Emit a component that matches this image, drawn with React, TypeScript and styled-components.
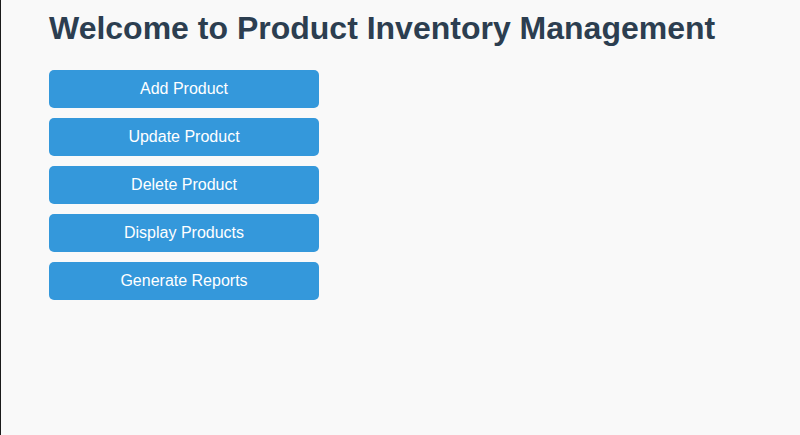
import styled, { createGlobalStyle } from 'styled-components';

const GlobalStyle = createGlobalStyle`
    html, body {
        margin: 0;
        padding: 0;
        background-color: #f9f9f9;
        font-family: "Liberation Sans", Arial, sans-serif;
    }
`;

const Page = styled.div`
    box-sizing: border-box;
    min-height: 435px;
    border-left: 1px solid #1a1a1a;
    padding: 10px 48px;
`;

const Title = styled.h1`
    margin: 0 0 23px;
    font-size: 32px;
    font-weight: bold;
    color: #2c3e50;
`;

const Menu = styled.div`
    display: flex;
    flex-direction: column;
    gap: 10px;
    width: 270px;
`;

const MenuButton = styled.button`
    height: 38px;
    border: none;
    border-radius: 5px;
    background-color: #3498db;
    color: #ffffff;
    font-family: "Liberation Sans", Arial, sans-serif;
    font-size: 16px;
    cursor: pointer;
    &:hover {
        background-color: #2980b9;
    }
`;

const actions = ['Add Product', 'Update Product', 'Delete Product', 'Display Products', 'Generate Reports'];

const App = () => {
    return (
        <>
            <GlobalStyle />
            <Page>
                <Title>Welcome to Product Inventory Management</Title>
                <Menu>
                    {actions.map((label) => (
                        <MenuButton key={label}>{label}</MenuButton>
                    ))}
                </Menu>
            </Page>
        </>
    );
};

export default App;
